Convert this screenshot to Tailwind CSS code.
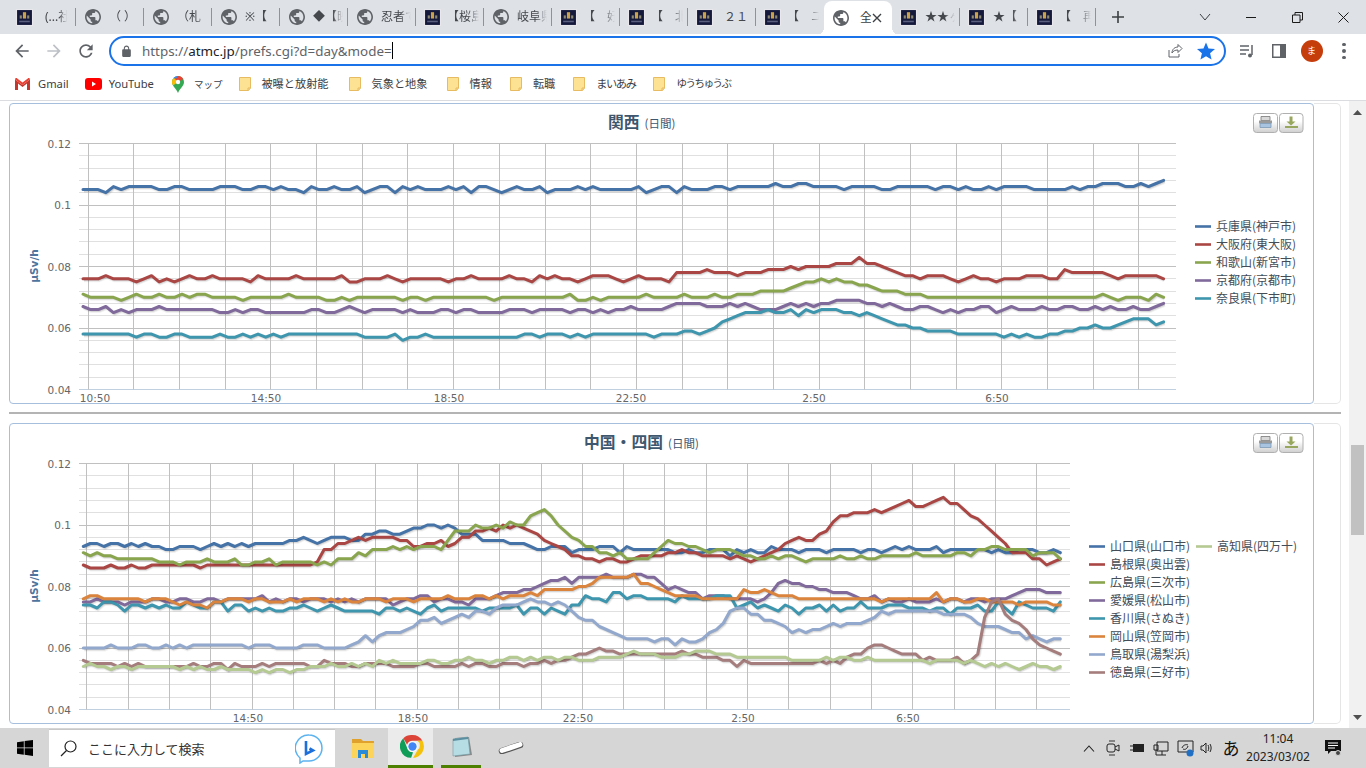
<!DOCTYPE html>
<html lang="ja">
<head>
  <meta charset="UTF-8" />
  <title>全国 日間グラフ</title>
  <script src="https://cdn.jsdelivr.net/npm/@tailwindcss/browser@4"></script>
</head>
<body class="w-[1366px] h-[768px] overflow-hidden flex flex-col bg-white font-['Noto_Sans','Noto_Sans_CJK_JP',sans-serif]">

  <!-- shared icons -->
  <svg class="hidden">
    <symbol id="globe" viewBox="2 2 20 20"><path fill="#5f6368" d="M12 2C6.48 2 2 6.48 2 12s4.48 10 10 10 10-4.48 10-10S17.52 2 12 2zm-1 17.93c-3.95-.49-7-3.85-7-7.93 0-.62.08-1.21.21-1.79L9 15v1c0 1.1.9 2 2 2v1.93zm6.9-2.54c-.26-.81-1-1.39-1.9-1.39h-1v-3c0-.55-.45-1-1-1H8v-2h2c.55 0 1-.45 1-1V7h2c1.1 0 2-.9 2-2v-.41c2.93 1.19 5 4.06 5 7.41 0 2.08-.8 3.97-2.1 5.39z"/></symbol>
    <symbol id="site" viewBox="0 0 16 16"><rect width="16" height="16" fill="#e8e8ec"/><rect x="1" y="1" width="14" height="14" fill="#15193b"/><rect x="6.5" y="3" width="3" height="6" fill="#c9a24a"/><rect x="3.5" y="6" width="2" height="3" fill="#8d8a74"/><rect x="10.5" y="6" width="2" height="3" fill="#8d8a74"/><rect x="3" y="11" width="10" height="1.5" fill="#5a5f80"/></symbol>
    <symbol id="folder" viewBox="0 0 12 14"><path d="M.5.5h11v10.5l-2 2.5H.5z" fill="#fde293" stroke="#e6bb62"/><path d="M9 13.5V11h2.5" fill="none" stroke="#e6bb62"/></symbol>
  </svg>

  <!-- tab strip -->
  <div class="h-[34px] shrink-0 bg-[#dee1e6] flex items-center pl-[8px] text-[12px] text-[#45484d]">
    <div class="w-[68px] h-full flex items-center pl-[8px]"><svg class="w-[17px] h-[17px] shrink-0"><use href="#site"/></svg><span class="ml-[12px] w-[22px] overflow-hidden whitespace-nowrap [mask-image:linear-gradient(to_right,black_65%,transparent)]">(...社</span><span class="ml-auto w-px h-[18px] bg-[#8f9296]"></span></div>
    <div class="w-[68px] h-full flex items-center pl-[9px]"><svg class="w-[16px] h-[16px] shrink-0"><use href="#globe"/></svg><span class="ml-[8px] w-[30px] overflow-hidden whitespace-nowrap [mask-image:linear-gradient(to_right,black_65%,transparent)]">（ ）</span><span class="ml-auto w-px h-[18px] bg-[#8f9296]"></span></div>
    <div class="w-[68px] h-full flex items-center pl-[9px]"><svg class="w-[16px] h-[16px] shrink-0"><use href="#globe"/></svg><span class="ml-[8px] w-[30px] overflow-hidden whitespace-nowrap [mask-image:linear-gradient(to_right,black_65%,transparent)]">（札</span><span class="ml-auto w-px h-[18px] bg-[#8f9296]"></span></div>
    <div class="w-[68px] h-full flex items-center pl-[9px]"><svg class="w-[16px] h-[16px] shrink-0"><use href="#globe"/></svg><span class="ml-[8px] w-[30px] overflow-hidden whitespace-nowrap [mask-image:linear-gradient(to_right,black_65%,transparent)]">※【</span><span class="ml-auto w-px h-[18px] bg-[#8f9296]"></span></div>
    <div class="w-[68px] h-full flex items-center pl-[9px]"><svg class="w-[16px] h-[16px] shrink-0"><use href="#globe"/></svg><span class="ml-[8px] w-[30px] overflow-hidden whitespace-nowrap [mask-image:linear-gradient(to_right,black_65%,transparent)]">◆【映</span><span class="ml-auto w-px h-[18px] bg-[#8f9296]"></span></div>
    <div class="w-[68px] h-full flex items-center pl-[9px]"><svg class="w-[16px] h-[16px] shrink-0"><use href="#globe"/></svg><span class="ml-[8px] w-[30px] overflow-hidden whitespace-nowrap [mask-image:linear-gradient(to_right,black_65%,transparent)]">忍者で</span><span class="ml-auto w-px h-[18px] bg-[#8f9296]"></span></div>
    <div class="w-[68px] h-full flex items-center pl-[8px]"><svg class="w-[17px] h-[17px] shrink-0"><use href="#site"/></svg><span class="ml-[6px] w-[32px] overflow-hidden whitespace-nowrap [mask-image:linear-gradient(to_right,black_65%,transparent)]">【桜島</span><span class="ml-auto w-px h-[18px] bg-[#8f9296]"></span></div>
    <div class="w-[68px] h-full flex items-center pl-[9px]"><svg class="w-[16px] h-[16px] shrink-0"><use href="#globe"/></svg><span class="ml-[8px] w-[30px] overflow-hidden whitespace-nowrap [mask-image:linear-gradient(to_right,black_65%,transparent)]">岐阜県</span><span class="ml-auto w-px h-[18px] bg-[#8f9296]"></span></div>
    <div class="w-[68px] h-full flex items-center pl-[8px]"><svg class="w-[17px] h-[17px] shrink-0"><use href="#site"/></svg><span class="ml-[6px] w-[32px] overflow-hidden whitespace-nowrap [mask-image:linear-gradient(to_right,black_65%,transparent)]">【　好</span><span class="ml-auto w-px h-[18px] bg-[#8f9296]"></span></div>
    <div class="w-[68px] h-full flex items-center pl-[8px]"><svg class="w-[17px] h-[17px] shrink-0"><use href="#site"/></svg><span class="ml-[6px] w-[32px] overflow-hidden whitespace-nowrap [mask-image:linear-gradient(to_right,black_65%,transparent)]">【　北</span><span class="ml-auto w-px h-[18px] bg-[#8f9296]"></span></div>
    <div class="w-[68px] h-full flex items-center pl-[8px]"><svg class="w-[17px] h-[17px] shrink-0"><use href="#site"/></svg><span class="ml-[11px] w-[28px] overflow-hidden whitespace-nowrap">２１</span><span class="ml-auto w-px h-[18px] bg-[#8f9296]"></span></div>
    <div class="w-[68px] h-full flex items-center pl-[8px]"><svg class="w-[17px] h-[17px] shrink-0"><use href="#site"/></svg><span class="ml-[6px] w-[32px] overflow-hidden whitespace-nowrap [mask-image:linear-gradient(to_right,black_65%,transparent)]">【　ユ</span></div>
    <div class="relative w-[68px] h-full mt-[2px] flex items-center pl-[9px] bg-white rounded-t-[8px] text-[#3c4043]">
      <span class="absolute -left-[8px] bottom-0 w-[8px] h-[8px] bg-[radial-gradient(circle_at_0_0,transparent_8px,white_8px)]"></span>
      <span class="absolute -right-[8px] bottom-0 w-[8px] h-[8px] bg-[radial-gradient(circle_at_100%_0,transparent_8px,white_8px)]"></span>
      <svg class="w-[16px] h-[16px] shrink-0"><use href="#globe"/></svg><span class="ml-[11px] w-[11px] overflow-hidden whitespace-nowrap">全</span>
      <svg class="ml-[1px] w-[10px] h-[10px] shrink-0" viewBox="0 0 10 10"><path d="M1 1l8 8M9 1l-8 8" stroke="#3c4043" stroke-width="1.4"/></svg>
    </div>
    <div class="w-[68px] h-full flex items-center pl-[8px]"><svg class="w-[17px] h-[17px] shrink-0"><use href="#site"/></svg><span class="ml-[8px] w-[30px] overflow-hidden whitespace-nowrap [mask-image:linear-gradient(to_right,black_65%,transparent)]">★★ヶ</span><span class="ml-auto w-px h-[18px] bg-[#8f9296]"></span></div>
    <div class="w-[68px] h-full flex items-center pl-[8px]"><svg class="w-[17px] h-[17px] shrink-0"><use href="#site"/></svg><span class="ml-[8px] w-[30px] overflow-hidden whitespace-nowrap [mask-image:linear-gradient(to_right,black_65%,transparent)]">★【</span><span class="ml-auto w-px h-[18px] bg-[#8f9296]"></span></div>
    <div class="w-[68px] h-full flex items-center pl-[8px]"><svg class="w-[17px] h-[17px] shrink-0"><use href="#site"/></svg><span class="ml-[6px] w-[32px] overflow-hidden whitespace-nowrap [mask-image:linear-gradient(to_right,black_65%,transparent)]">【　再</span><span class="ml-auto w-px h-[18px] bg-[#8f9296]"></span></div>
    <svg class="ml-[15px] w-[14px] h-[14px]" viewBox="0 0 14 14"><path d="M7 1v12M1 7h12" stroke="#3c4043" stroke-width="1.6"/></svg>
    <div class="ml-auto flex items-center">
      <div class="w-[46px] flex justify-center"><svg class="w-[12px] h-[8px]" viewBox="0 0 12 8"><path d="M1 1l5 6 5-6" fill="none" stroke="#3c4043"/></svg></div>
      <div class="w-[46px] flex justify-center"><span class="w-[10px] h-px bg-[#1a1a1a]"></span></div>
      <div class="w-[46px] flex justify-center"><svg class="w-[11px] h-[11px]" viewBox="0 0 11 11"><path d="M.5 3h7.500v7.500H.5zM3 3V.5h7.500V8H8" fill="none" stroke="#1a1a1a"/></svg></div>
      <div class="w-[46px] flex justify-center"><svg class="w-[11px] h-[11px]" viewBox="0 0 11 11"><path d="M.5.5l10 10M10.500.5l-10 10" stroke="#1a1a1a"/></svg></div>
    </div>
  </div>

  <!-- toolbar -->
  <div class="h-[34px] shrink-0 bg-white flex items-center pl-[6px]">
    <div class="w-[32px] flex justify-center"><svg class="w-[20px] h-[20px]" viewBox="0 0 24 24"><path fill="#5f6368" d="M20 11H7.830l5.590-5.590L12 4l-8 8 8 8 1.410-1.410L7.830 13H20v-2z"/></svg></div>
    <div class="w-[32px] flex justify-center"><svg class="w-[20px] h-[20px]" viewBox="0 0 24 24"><path fill="#bdc1c6" d="M12 4l-1.410 1.410L16.170 11H4v2h12.170l-5.580 5.590L12 20l8-8z"/></svg></div>
    <div class="w-[32px] flex justify-center"><svg class="w-[20px] h-[20px]" viewBox="0 0 24 24"><path fill="#5f6368" d="M17.650 6.350C16.200 4.900 14.210 4 12 4c-4.420 0-7.990 3.580-7.990 8s3.570 8 7.990 8c3.730 0 6.840-2.550 7.730-6h-2.080c-.82 2.330-3.040 4-5.650 4-3.310 0-6-2.690-6-6s2.690-6 6-6c1.660 0 3.140.69 4.220 1.780L13 11h7V4l-2.350 2.350z"/></svg></div>
    <div class="ml-[7px] w-[1117px] h-[30px] border-2 border-[#1a73e8] rounded-full flex items-center pl-[9px] pr-[8px]">
      <svg class="w-[13px] h-[13px] shrink-0" viewBox="0 0 24 24"><path fill="#5f6368" d="M18 8h-1V6c0-2.760-2.240-5-5-5S7 3.240 7 6v2H6c-1.100 0-2 .9-2 2v10c0 1.100.9 2 2 2h12c1.100 0 2-.9 2-2V10c0-1.100-.9-2-2-2zM9 6c0-1.660 1.340-3 3-3s3 1.340 3 3v2H9V6z"/></svg>
      <div class="ml-[9px] flex items-center text-[13.4px] text-[#5f6368] font-['Noto_Sans',sans-serif]">https://<span class="text-[#202124]">atmc.jp</span>/prefs.cgi?d=day&amp;mode=<span class="w-px h-[17px] bg-black"></span></div>
      <svg class="ml-auto w-[16px] h-[16px] shrink-0" viewBox="0 0 16 16"><path d="M2 7v7h10v-3M5 10c0-4 3-6 6-6V1.500l4 4-4 4V7c-3 0-5 1-6 3z" fill="none" stroke="#5f6368"/></svg>
      <svg class="ml-[14px] mr-[1px] w-[18px] h-[18px] shrink-0" viewBox="2 2 20 19"><path fill="#1a73e8" d="M12 17.270L18.180 21l-1.640-7.030L22 9.240l-7.190-.61L12 2 9.190 8.630 2 9.240l5.460 4.730L5.820 21z"/></svg>
    </div>
    <div class="ml-[5px] w-[32px] flex justify-center"><svg class="w-[16px] h-[16px]" viewBox="0 0 16 16"><path d="M1 3h9M1 7h9M1 11h6" stroke="#5f6368" stroke-width="1.5"/><path d="M13 2v10" stroke="#5f6368" stroke-width="1.500"/><circle cx="11" cy="12.500" r="2" fill="#5f6368"/></svg></div>
    <div class="w-[32px] flex justify-center"><svg class="w-[14px] h-[14px]" viewBox="0 0 14 14"><rect x=".75" y=".75" width="12.500" height="12.500" fill="none" stroke="#5f6368" stroke-width="1.500"/><rect x="8" y="1" width="5" height="12" fill="#5f6368"/></svg></div>
    <div class="w-[33px] flex justify-center"><span class="w-[22px] h-[22px] rounded-full bg-[#c63d0c] text-white text-[9px] flex items-center justify-center font-['Noto_Sans_CJK_JP',sans-serif]">ま</span></div>
    <div class="w-[32px] flex flex-col items-center gap-[3px]"><span class="w-[3.500px] h-[3.500px] rounded-full bg-[#5f6368]"></span><span class="w-[3.500px] h-[3.500px] rounded-full bg-[#5f6368]"></span><span class="w-[3.500px] h-[3.500px] rounded-full bg-[#5f6368]"></span></div>
  </div>

  <!-- bookmarks -->
  <div class="h-[33px] shrink-0 bg-white border-b border-[#dadce0] flex items-center pl-[15px] text-[11.2px] text-[#3c4043] whitespace-nowrap">
    <svg class="w-[15px] h-[12px]" viewBox="0 0 15 12"><path d="M0 12V1.500L7.500 7 15 1.500V12h-3V5.500L7.500 9 3 5.500V12z" fill="#c5372c"/><path d="M0 1.500C0 .3 1.200-.3 2.200.4L7.500 4.500 12.800.4c1-.7 2.200-.1 2.200 1.100L7.500 7z" fill="#ea4335"/></svg>
    <span class="ml-[8px]">Gmail</span>
    <svg class="ml-[16px] w-[17px] h-[12px]" viewBox="0 0 17 12"><rect width="17" height="12" rx="3" fill="#f00"/><path d="M7 3.500v5l4-2.500z" fill="#fff"/></svg>
    <span class="ml-[7px]">YouTube</span>
    <svg class="ml-[18px] w-[12px] h-[17px]" viewBox="0 0 12 17"><path d="M6 0a6 6 0 0 1 6 6c0 4-4 6-6 11-2-5-6-7-6-11a6 6 0 0 1 6-6z" fill="#34a853"/><path d="M1.700 1.800A6 6 0 0 1 6 0l-2 4z" fill="#4285f4"/><path d="M6 0a6 6 0 0 1 5.200 3L6 6 3.500 3.500z" fill="#ea4335"/><path d="M0 6a6 6 0 0 1 1.700-4.200L6 6 1 9.500A6 6 0 0 1 0 6z" fill="#fbbc04"/><circle cx="6" cy="6" r="2.200" fill="#fff"/></svg>
    <span class="ml-[10px] text-[9.5px] font-['Noto_Sans_CJK_JP',sans-serif]">マップ</span>
    <svg class="ml-[17px] w-[12px] h-[14px]"><use href="#folder"/></svg><span class="ml-[10px]">被曝と放射能</span>
    <svg class="ml-[20px] w-[12px] h-[14px]"><use href="#folder"/></svg><span class="ml-[11px]">気象と地象</span>
    <svg class="ml-[19px] w-[12px] h-[14px]"><use href="#folder"/></svg><span class="ml-[11px]">情報</span>
    <svg class="ml-[18px] w-[12px] h-[14px]"><use href="#folder"/></svg><span class="ml-[11px]">転職</span>
    <svg class="ml-[18px] w-[12px] h-[14px]"><use href="#folder"/></svg><span class="ml-[11px] tracking-[-1.4px]">まいあみ</span>
    <svg class="ml-[18px] w-[12px] h-[14px]"><use href="#folder"/></svg><span class="ml-[11px] text-[10.5px] tracking-[-1.5px]">ゆうちゅうぶ</span>
  </div>

  <!-- page -->
  <div class="flex-1 flex overflow-hidden bg-white">
    <main class="flex-1 pl-[9px] pt-[2px]">
      <section class="flex w-[1332px] h-[301px]">
        <div class="w-[1305px] h-full border border-[#a6bfdd] rounded-[4px]"><svg id="chart-kansai" class="block overflow-visible" width="1303" height="299" viewBox="10 104 1303 299"></svg></div>
        <div class="flex-1 border-y border-r border-[#e5e5e5] rounded-r-[5px]"></div>
      </section>
      <div class="w-[1332px] h-[2px] mt-[8px] mb-[9px] bg-[#b4b4b4]"></div>
      <section class="flex w-[1332px] h-[301px]">
        <div class="w-[1305px] h-full border border-[#a6bfdd] rounded-[4px]"><svg id="chart-chugoku" class="block overflow-visible" width="1303" height="299" viewBox="10 424 1303 299"></svg></div>
        <div class="flex-1 border-y border-r border-[#e5e5e5] rounded-r-[5px]"></div>
      </section>
    </main>
    <!-- scrollbar -->
    <div class="w-[17px] bg-[#f1f1f1] flex flex-col items-center">
      <svg class="mt-[9px] w-[9px] h-[5px]" viewBox="0 0 9 5"><path d="M4.500 0L9 5H0z" fill="#505050"/></svg>
      <div class="mt-[330px] w-[13px] h-[90px] bg-[#c1c1c1]"></div>
      <svg class="mt-auto mb-[8px] w-[9px] h-[5px]" viewBox="0 0 9 5"><path d="M0 0h9L4.500 5z" fill="#505050"/></svg>
    </div>
  </div>

  <!-- taskbar -->
  <div class="h-[40px] shrink-0 bg-[#d6d6d6] flex items-center font-['Noto_Sans_CJK_JP',sans-serif]">
    <div class="w-[49px] flex justify-center"><svg class="w-[16px] h-[16px]" viewBox="0 0 16 16"><path d="M0 2.200l6.800-1V7.500H0zM7.600 1.100L16 0v7.500H7.600zM0 8.300h6.800v6.500l-6.800-1zM7.600 8.300H16V16l-8.400-1.200z" fill="#000"/></svg></div>
    <div class="w-[286px] h-[38px] bg-white border-t border-[#c8c8c8] flex items-center pl-[11px]">
      <svg class="w-[17px] h-[17px]" viewBox="0 0 17 17"><circle cx="10.500" cy="6.500" r="5.500" fill="none" stroke="#222" stroke-width="1.200"/><path d="M6.500 10.500L1 16" stroke="#222" stroke-width="1.300"/></svg>
      <span class="ml-[11px] text-[13px] text-[#333]">ここに入力して検索</span>
      <svg class="ml-auto mr-[12px] w-[28px] h-[30px]" viewBox="0 0 28 30"><path d="M14 1a13 13 0 0 1 0 26H8l-3 2v-5A13 13 0 0 1 14 1z" fill="#fff" stroke="#5cb3f0" stroke-width="1.500"/><path d="M11 7v13l7-3.500-3.500-2" fill="none" stroke="#1d6fdc" stroke-width="2.600"/></svg>
    </div>
    <div class="ml-[17px] w-[22px] h-[20px]"><svg class="w-[22px] h-[20px]" viewBox="0 0 22 20"><path d="M0 1h9l2 2h11v4H0z" fill="#e0a22c"/><path d="M0 5h22v15H0z" fill="#fcd45c"/><path d="M6 12h10v8h-3v-4H9v4H6z" fill="#2a8bd8"/></svg></div>
    <div class="ml-[14px] w-[45px] h-full bg-[#ebebeb] border-b-[3px] border-[#4d8000] flex items-center justify-center">
      <svg class="ml-[4px] w-[25px] h-[25px]" viewBox="0 0 24 24"><path d="M12 1a11 11 0 0 1 9.500 5.500H12a5.500 5.500 0 0 0-5.200 3.700L3.200 4.100A11 11 0 0 1 12 1z" fill="#db4437"/><path d="M21.500 6.500A11 11 0 0 1 12.500 23l4.300-7.500a5.500 5.500 0 0 0 0-9z" fill="#f4c20d"/><path d="M3.200 4.100L7.500 15a5.500 5.500 0 0 0 5 2.500l-1.800 5.400A11 11 0 0 1 3.200 4.100z" fill="#0f9d58"/><circle cx="12" cy="12" r="5" fill="#fff"/><circle cx="12" cy="12" r="4" fill="#4285f4"/></svg>
    </div>
    <div class="ml-[8px] w-[40px] h-full border-b-[3px] border-[#4d8000] flex items-center justify-center">
      <svg class="w-[24px] h-[22px]" viewBox="0 0 24 22"><path d="M6 2l14-1 3 18-17 2z" fill="#8a8a8a"/><path d="M4 3l15-2 2 17-17 2z" fill="#b7dde4" stroke="#6f9aa5" stroke-width=".6"/><path d="M4 3l15-2v2L4 5z" fill="#5b8fa0"/></svg>
    </div>
    <svg class="ml-[17px] w-[26px] h-[12px]" viewBox="0 0 26 12"><path d="M4 9L22 3" stroke="#555" stroke-width="6.500" stroke-linecap="round"/><path d="M4 8.500L22 2.500" stroke="#fff" stroke-width="5" stroke-linecap="round"/></svg>

    <div class="ml-auto flex items-center pr-[25px]">
      <div class="w-[24px] flex justify-center"><svg class="w-[12px] h-[7px]" viewBox="0 0 12 7"><path d="M1 6.500l5-5.500 5 5.500" fill="none" stroke="#222" stroke-width="1.100"/></svg></div>
      <div class="w-[24px] flex justify-center"><svg class="w-[14px] h-[18px]" viewBox="0 0 14 18"><path d="M3 2h6M3 16h6" stroke="#333"/><rect x="1" y="5" width="8" height="8" rx="2" fill="none" stroke="#222"/><path d="M9 8l4-2v6l-4-2" fill="none" stroke="#222"/></svg></div>
      <div class="w-[24px] flex justify-center"><svg class="w-[16px] h-[12px]" viewBox="0 0 16 12"><rect x="4" y="2" width="11" height="8" fill="#222"/><path d="M1 4h3M1 8h3" stroke="#222" stroke-width="1.200"/></svg></div>
      <div class="w-[24px] flex justify-center"><svg class="w-[16px] h-[15px]" viewBox="0 0 16 15"><path d="M4 1h11v9H4zM1 4h4v5H1zM3 9v5h10M9 10v4" fill="none" stroke="#222"/></svg></div>
      <div class="w-[24px] flex justify-center"><svg class="w-[17px] h-[17px]" viewBox="0 0 17 17"><path d="M1 1h15v11H1z" fill="none" stroke="#222"/><path d="M5 8c1-3 4-4 6-3M11 6c-1 3-3 4-5 3" fill="none" stroke="#222"/><circle cx="13" cy="13" r="3.500" fill="#1f6fc4"/></svg></div>
      <div class="w-[20px] flex justify-center"><svg class="w-[14px] h-[12px]" viewBox="0 0 14 12"><path d="M1 4h2l3-3v10L3 8H1zM8 3c1 2 1 4 0 6M10 2c1.500 2.500 1.500 5.500 0 8" fill="none" stroke="#222"/></svg></div>
      <div class="w-[28px] text-center text-[17px] text-[#111]">あ</div>
      <div class="w-[66px] flex flex-col items-center text-[12px] leading-[18px] text-[#222] font-['Noto_Sans',sans-serif]"><span>11:04</span><span>2023/03/02</span></div>
      <div class="ml-[14px] w-[16px]"><svg class="w-[16px] h-[16px]" viewBox="0 0 16 16"><path d="M0 0h16v11H6l-3 3v-3H0z" fill="#111"/><path d="M3 3h10M3 5.500h10M3 8h7" stroke="#fff"/><circle cx="13" cy="13" r="2.500" fill="#444" stroke="#d6d6d6"/></svg></div>
    </div>
  </div>

  <script>
    const colors = ["#4572A7", "#AA4643", "#89A54E", "#80699B", "#3D96AE", "#DB843D", "#92A8CD", "#A47D7C", "#B5CA92"];

    // readings are in 0.001 µSv/h, "105*3" means three in a row
    function parse(s) {
      const out = [];
      s.trim().split(/\s+/).forEach(t => {
        const [v, n] = t.split("*");
        for (let i = 0; i < (n || 1); i++) out.push(+v);
      });
      return out;
    }

    const kansai = {
      id: "chart-kansai", off: 0, x0: 83, step: 7.61, right: 1176,
      tick0: 87.7, tickStep: 45.68,
      title: "関西", titleX: 608,
      xLabels: [["10:50", 95], ["14:50", 266], ["18:50", 449], ["22:50", 631], ["2:50", 814], ["6:50", 997]],
      legend: [[1195, 0, "兵庫県(神戸市)"], [1195, 1, "大阪府(東大阪)"], [1195, 2, "和歌山(新宮市)"], [1195, 3, "京都府(京都市)"], [1195, 4, "奈良県(下市町)"]],
      series: [
        "105*3 104 106 105 106*4 105*2 106*2 105*4 106*3 105*2 106*2 105 106 105*2 104 106 105*2 106 105*2 106 104 105 106*2 104 106 105 106 105*3 106 105 106 104 106*2 105 104 105 106 105*2 106 104 105*3 106 105 106 105*5 106 104 105 106*2 104 106 105*3 106*2 105 106*5 107 106*2 107*2 106*4 105 106*4 105*2 106*5 105 106*2 105 106 105*2 106 105 106*4 105*5 106 105 106*2 107*3 106*2 107 106 107 108",
        "76*3 77 76*3 75 76 77 75 76 75 76 77 76*2 77 76*4 75 77 76*4 77 76*5 77 75*2 76*3 77 76 75 76*5 75 76*2 77 76*4 77 76*2 75 77 76 77 76*2 75 76 77*3 76 75 76 77 76*3 75 78*4 79 78*3 77 78*3 79*3 80 79 80*4 81*3 83 81*2 80 79 78 77*2 76 77*3 76 75 76 77 76*2 75 76*3 77*3 76*2 79 78*5 77 76 77*5 76",
        "71 70*4 69 70 71 70*2 71 70*2 71 70 71*2 70*4 69 70*5 71 70*4 69*2 70 69 70*6 69 70*2 69 70*8 69 70*9 71 69*2 70 69 70*5 71 70*4 71 70*3 71 70*2 71*3 72*4 73 74 75*2 76 75 76 75*2 74*2 73 72*3 71*3 70*23 71 70 69 70*3 69 71 70",
        "67 66*2 67 65 66 65 66*3 67 66*7 65*2 66 65 66*2 65*6 66*2 65*2 66 67 66 65 66*4 65 66 65*3 66*2 65 66*2 65*4 66*3 65 66*4 65 66*2 65 66 65 66*2 67 66*4 67 68*4 67*3 68 67 68 67 66*3 67 68 67 68 67 68*2 69*4 68*2 67 68 67 66*2 67*2 66 65 66 65 66*2 67*2 65 66 67 66*3 67 66*2 67*2 66*2 67 66 67 66*2 67 66*2 67 68",
        "58*7 57 58*2 57*2 58*2 57*4 58 57*2 58 57 58 57 58 57 58*10 57*4 58 56 57*2 58 57*12 58*2 57 58*3 57 58 57 58*8 57 58*3 59*2 58 59 60 62 63 64 65*3 66 65*2 66 64 66 65 66*3 65*2 64 65 64 63 62 61*2 60*2 59*4 58*6 57 58 57 58 57*2 58*2 59*2 60*2 61 60*2 61 62 63*3 61 62"
      ]
    };

    const chugoku = {
      id: "chart-chugoku", off: 320, x0: 83.3, step: 6.88, right: 1070,
      tick0: 86.3, tickStep: 41.3,
      title: "中国・四国", titleX: 584,
      xLabels: [["14:50", 248], ["18:50", 413], ["22:50", 578], ["2:50", 743], ["6:50", 908]],
      legend: [[1089, 0, "山口県(山口市)"], [1089, 1, "島根県(奥出雲)"], [1089, 2, "広島県(三次市)"], [1089, 3, "愛媛県(松山市)"], [1089, 4, "香川県(さぬき)"], [1089, 5, "岡山県(笠岡市)"], [1089, 6, "鳥取県(湯梨浜)"], [1089, 7, "徳島県(三好市)"], [1196, 8, "高知県(四万十)", 0]],
      series: [
        "93 94 94 93 94 94 93 94 93 94  93 93 92 92 93 93 93 92 93 94  93 94 93 94 93 94 94 94 94 94  95 95 96 95 94 95 96 96 96 95  95 97 97 98 98 97 97 98 99 99  100 100 99 100 99 97 97 97 95 95  95 95 94 94 94 93 92 92 93 93  93 91 92 92 92 93 93 93 91 93  92 92 92 92 92 92 91 91 92 91  91 92 92 92 90 92 91 92 91 91  93 92 92 92 91 92 92 92 91 92  92 92 92 91 92 92 91 92 93 92  93 92 92 92 93 91 92 92 92 92  92 92 91 92 91 91 92 92 92 91  91 92 91",
        "87 86 86 86 87 86 86 87 86 86  87 87 87 87 87 87 87 86 87 87  87*10  87 87 87 87 88 92 92 94 94 95  96 95 96 96 96 96 95 95 93 93  94 94 95 93 94 96 96 98 98 99  98 100 99 100 99 98 97 95 94 93  92 90 90 89 89 88 89 89 88 88  89 90 90 90 90 91 91 92 91 91  90 90 90 90 89 90 89 88 89 90  91 92 94 95 96 95 95 97 98 101  103 103 104 104 104 105 104 105 106 107  108 106 106 107 108 109 107 107 105 103  102 100 98 96 94 91 91 91 89 89 87 88 89",
        "91 90 91 90 90 89 89 89 89 89  89 88 88 88 87 88 88 88 89 88  88 88 89 87 87 88 88 89 87 88  88 88 88 88 87 88 87 89 89 89  91 90 92 92 92 93 92 93 92 93  93 93 92 95 98 98 98 100 99 99  100 99 101 100 100 103 104 105 103 100  98 96 95 93 93 91 91 90 91 89  89 89 89 91 93 95 94 94 93 93  92 91 92 92 92 91 90 90 89 89  90 89 90 90 89 88 89 89 89 89  90 89 89 90 89 89 90 90 90 90  90 91 90 90 90 90 90 91 91 90  92 92 93 93 92 92 92 92 90 91 91 91 89",
        "75 75 76 75 75 75 74 75 75 75  76 76 75 75 76 76 75 75 76 76  75 76 76 76 76 76 77 75 76 75  76 76 75 76 76 76 75 76 75 76  75 76 76 76 76 74 75 76 76 77  77 75 76 76 75 75 74 76 76 76  77 78 78 78 79 79 80 81 82 82  83 81 83 83 83 83 84 83 83 83  84 84 83 83 81 79 80 79 78 78  76 77 77 77 76 76 76 76 75 76  78 81 82 81 81 80 80 79 79 78  78 78 77 76 76 77 75 76 75 75  76 75 75 75 76 75 76 76 75 76  76 75 76 76 76 77 78 79 79 79 78 78 78",
        "74 74 73 75 75 74 72 74 74 73  74 73 74 73 73 75 74 73 73 75  75 72 74 74 72 73 72 73 72 72  73 73 74 73 72 73 74 73 72 72  72 72 72 71 73 73 72 73 72 71  73 74 72 73 73 73 73 73 72 73  73 73 73 74 71 73 73 71 73 72  71 74 74 77 76 76 75 78 78 76  77 77 76 76 76 76 75 77 76 76  76 76 77 77 77 73 74 75 73 74  73 72 74 73 71 73 73 74 72 74  72 73 73 75 73 73 73 74 74 74  73 73 73 72 73 73 71 73 73 73  74 72 72 75 73 71 75 74 73 73 73 72 75",
        "76 77 77 76 76 76 76 76 76 75  76 76 76 75 74 75 74 74 73 75  75 76 76 76 75 76 76 75 75 75  76 75 76 76 76 75 76 75 76 75  75 76 76 76 75 76 76 76 75 76  76 76 76 77 76 76 76 77 77 76  77 76 77 77 77 78 77 79 79 79  79 79 80 80 81 83 83 83 83 83  84 81 81 80 79 78 77 77 77 77  76 76 76 76 76 76 79 78 78 79  78 77 77 77 76 76 76 76 76 76  76 76 76 76 76 76 75 76 76 76  76 76 76 76 78 75 76 76 75 75  76 76 75 75 75 75 74 75 75 75 75 74 74",
        "60 60 60 60 61 60 60 60 61 61  60 60 61 60 61 60 61 61 61 61  61 61 61 61 60 61 61 61 60 60  60 60 61 61 61 60 60 60 60 61  62 64 62 64 65 65 65 66 67 69  69 70 68 69 70 71 70 72 72 71  73 74 74 74 75 76 75 75 74 75  74 72 70 69 69 67 66 65 64 63  63 63 63 62 63 63 61 63 62 62  63 65 66 68 72 73 73 71 71 69  69 68 67 65 66 65 66 66 67 68  67 68 68 68 69 70 72 71 72 72  72 72 72 72 72 71 71 71 71 70  68 67 67 67 66 65 65 63 64 63 62 63 63",
        "56 55 55 55 55 54 55 54 55 54  54 54 54 54 54 54 55 54 54 55  55 53 55 54 54 54 55 54 55 55  55 55 55 54 54 56 55 55 55 54  54 55 55 55 55 54 54 54 54 55  55 54 54 54 54 55 54 55 55 54  54 55 55 55 54 55 55 56 55 56  56 57 58 58 59 60 59 59 58 58  58 58 58 58 58 58 58 59 58 58  57 57 57 56 56 54 56 55 55 55  55 55 55 55 55 55 55 56 55 56  55 57 58 58 60 61 61 60 59 58  58 58 56 57 56 56 56 57 55 56  58 70 75 76 71 69 68 66 63 61 60 59 58",
        "54 55 54 54 53 54 54 53 54 54  54 54 54 54 53 54 53 54 53 53  54 53 53 53 53 52 53 52 53 53  52 53 53 54 54 54 55 54 54 55  54 55 54 56 55 56 55 55 55 55  56 56 55 55 56 56 57 56 56 55  56 56 57 57 56 57 56 57 57 56  57 57 56 56 56 57 57 57 57 58  59 58 58 58 57 57 57 58 58 59  59 59 58 58 58 57 57 57 57 57  57 57 57 56 56 56 56 56 57 56  57 57 56 56 57 56 56 56 56 56  56 56 56 55 56 56 56 56 55 56  55 54 55 54 55 54 53 54 55 54 54 53 54"
      ]
    };

    const axisText = "font-['DejaVu_Sans',sans-serif] text-[10.5px] fill-[#666666]";
    const cjkText = "font-['Noto_Sans_CJK_JP',sans-serif]";

    function draw(c) {
      const off = c.off;
      const yOf = v => 143.5 + off + (120 - v) * 3.075;
      const top = yOf(120), bottom = yOf(40);
      let s = "";

      // minor then major horizontal grid
      for (let i = 0; i <= 20; i++) {
        const y = Math.round(top + i * 12.3 - 0.5) + 0.5;
        if (i % 5) s += `<line x1="79" x2="${c.right}" y1="${y}" y2="${y}" stroke="#e0e0e0"/>`;
      }
      for (let i = 0; i <= 4; i++) {
        const y = Math.round(top + i * 61.5 - 0.5) + 0.5;
        s += `<line x1="79" x2="${c.right}" y1="${y}" y2="${y}" stroke="${i == 4 ? "#c0d0e0" : "#c0c0c0"}"/>`;
      }
      for (let x = c.tick0; x < c.right; x += c.tickStep) {
        const rx = Math.round(x) + 0.5;
        s += `<line x1="${rx}" x2="${rx}" y1="${top}" y2="${bottom}" stroke="#c0c0c0"/>`;
      }

      // lines, with the chart library's soft shadow under each
      c.series.forEach((str, n) => {
        const pts = parse(str).map((v, i) => (c.x0 + i * c.step).toFixed(1) + "," + yOf(v).toFixed(1)).join(" ");
        [[5, .05], [3, .1], [1, .15]].forEach(([w, o]) => {
          s += `<polyline points="${pts}" fill="none" stroke="#000" stroke-opacity="${o}" stroke-width="${w}" stroke-linejoin="round" transform="translate(1,1)"/>`;
        });
        s += `<polyline points="${pts}" fill="none" stroke="${colors[n]}" stroke-width="3" stroke-linejoin="round" stroke-linecap="round"/>`;
      });

      // axes text
      ["0.12", "0.1", "0.08", "0.06", "0.04"].forEach((t, i) => {
        s += `<text x="71" y="${top + i * 61.5 + 4}" text-anchor="end" class="${axisText}">${t}</text>`;
      });
      c.xLabels.forEach(([t, x]) => {
        s += `<text x="${x}" y="${402 + off}" text-anchor="middle" class="${axisText}">${t}</text>`;
      });
      s += `<text transform="translate(38,${266 + off}) rotate(-90)" text-anchor="middle" class="font-['DejaVu_Sans',sans-serif] font-bold text-[10.5px] fill-[#4d759e]">µSv/h</text>`;

      // title
      s += `<text x="${c.titleX}" y="${127.5 + off}" class="${cjkText} fill-[#3e576f]"><tspan class="text-[15.8px] font-bold">${c.title}</tspan><tspan dx="5" class="text-[11.500px]">(日間)</tspan></text>`;

      // legend
      c.legend.forEach(([x, color, name, row]) => {
        const r = row === undefined ? color : row;
        const y = 226.5 + off + r * 18;
        s += `<line x1="${x}" x2="${x + 16}" y1="${y}" y2="${y}" stroke="${colors[color]}" stroke-width="2.6"/>`;
        s += `<text x="${x + 21}" y="${y + 4.5}" class="${cjkText} text-[12px] fill-[#444c55]">${name}</text>`;
      });

      // print and download buttons
      const g = "btn-" + c.id;
      s += `<defs><linearGradient id="${g}" x1="0" y1="0" x2="0" y2="1"><stop offset=".4" stop-color="#ffffff"/><stop offset="1" stop-color="#cfcfcf"/></linearGradient></defs>`;
      const by = 113.5 + off;
      s += `<rect x="1253.5" y="${by}" width="24" height="19" rx="3" fill="url(#${g})" stroke="#b0b0b0"/>`;
      s += `<rect x="1279.5" y="${by}" width="23.5" height="19" rx="3" fill="url(#${g})" stroke="#b0b0b0"/>`;
      s += `<path d="M1261 ${by + 3}h9v4h-9z" fill="#d8d8d8" stroke="#777" stroke-width=".8"/><path d="M1259 ${by + 7}h13v3h-13z" fill="#9a9a9a"/><path d="M1260 ${by + 10}h11v4h-11z" fill="#a8c4e0" stroke="#7e9ab8" stroke-width=".8"/>`;
      s += `<path d="M1289.5 ${by + 3}h3v5h3l-4.500 4-4.500-4h3z" fill="#97a85e"/><path d="M1285 ${by + 13.5}h13" stroke="#97a85e" stroke-width="2"/>`;

      document.getElementById(c.id).innerHTML = s;
    }

    draw(kansai);
    draw(chugoku);
  </script>
</body>
</html>
